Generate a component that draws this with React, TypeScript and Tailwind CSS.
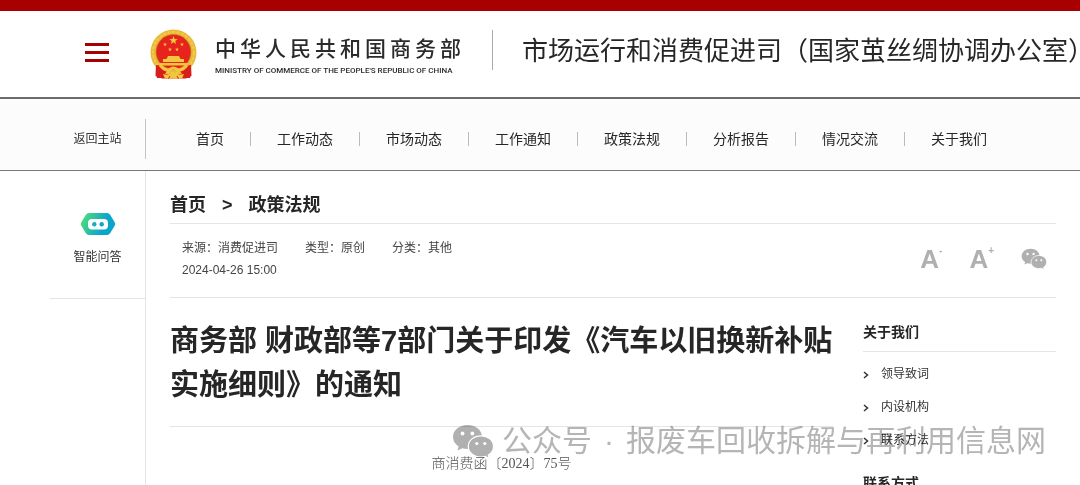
import { Fragment } from "react";

const navItems = [
  "首页",
  "工作动态",
  "市场动态",
  "工作通知",
  "政策法规",
  "分析报告",
  "情况交流",
  "关于我们",
];

const aboutLinks = ["领导致词", "内设机构", "联系方法"];

const STAR = "M0 -5 L1.2 -1.6 L4.8 -1.5 L1.9 0.6 L2.9 4 L0 2 L-2.9 4 L-1.9 0.6 L-4.8 -1.5 L-1.2 -1.6 Z";

function Emblem() {
  return (
    <svg viewBox="0 0 48 50" className="h-[50px] w-12 shrink-0" aria-hidden="true">
      <path d="M6 34 L5.500 47 L12 49.500 H36 L41.500 47 L41 34 Z" fill="#d81e1a" />
      <circle cx="23.500" cy="23.500" r="23" fill="#e9b93a" />
      <circle cx="23.500" cy="23.500" r="20.500" fill="none" stroke="#f3ca4c" strokeWidth="2" strokeDasharray="3 1.5" />
      <circle cx="23.500" cy="23" r="17.500" fill="#e6231c" stroke="#b98a1e" strokeWidth="0.6" />
      <g fill="#f3c63f">
        <path d={STAR} transform="translate(23.5 11.500) scale(.9)" />
        <path d={STAR} transform="translate(15 15.500) scale(.42)" />
        <path d={STAR} transform="translate(32 15.500) scale(.42)" />
        <path d={STAR} transform="translate(20 20.500) scale(.42)" />
        <path d={STAR} transform="translate(27 20.500) scale(.42)" />
        <path d="M18 27 H29 L30.500 30 H34 V33 H13 V30 H16.500 Z" />
        <path d="M9 34 H38 L37 36.500 H10 Z" />
      </g>
      <path d="M6 36 Q13 36 17 42 L12 49 H7 Q5.500 43 6 36 Z M41 36 Q34 36 30 42 L35 49 H40 Q41.500 43 41 36 Z" fill="#d81e1a" />
      <path d="M10 36 Q15 42.500 20 40.500 Q23.500 37.500 27 40.500 Q32 42.500 37 36" fill="none" stroke="#f3c63f" strokeWidth="3" />
      <path d="M13 45 L18 46 L23.500 43.500 L29 46 L34 45 L32 49.500 H15 Z" fill="#f3c63f" />
      <path d="M18.500 49.500 L20 47 M28.500 49.500 L27 47" fill="none" stroke="#d81e1a" strokeWidth="1" />
    </svg>
  );
}

function RobotIcon() {
  return (
    <svg viewBox="0 0 36 24" className="h-6 w-9" aria-hidden="true">
      <defs>
        <linearGradient id="robot" x1="0" x2="1" y1="0.300" y2="0.600">
          <stop offset="0.100" stopColor="#45d585" />
          <stop offset="0.700" stopColor="#0aa5cb" />
        </linearGradient>
      </defs>
      <path
        d="M9 1 H27 Q29 1 30.300 3 L34.800 10.500 Q35.800 12 34.800 13.500 L30.300 21 Q29 23 27 23 H9 Q7 23 5.700 21 L1.200 13.500 Q0.200 12 1.200 10.500 L5.700 3 Q7 1 9 1 Z"
        fill="url(#robot)"
      />
      <rect x="8" y="7" width="20" height="10.500" rx="4" fill="#fff" />
      <circle cx="14.300" cy="12.200" r="2.200" fill="#14aec0" />
      <circle cx="21.700" cy="12.200" r="2.200" fill="#0aa5cb" />
    </svg>
  );
}

function WechatIcon({ className }: { className?: string }) {
  return (
    <svg viewBox="0 0 42 35" className={className} aria-hidden="true">
      <path
        d="M15.500 1 C7.200 1 1 6.300 1 13 C1 17 3.200 20.200 6.600 22.500 L5.500 26.500 L10.300 24.200 C12 24.700 14 25 16 25 C24 25 30 19.600 30 13 C30 6.300 23.800 1 15.500 1 Z"
        fill="#b0b0b0"
      />
      <path
        d="M29 11.800 C21.800 11.800 16.300 16.500 16.300 22.400 C16.300 28.400 21.800 33 29 33 C30.500 33 32 32.800 33.300 32.400 L37.300 34.500 L36.300 31 C39.500 29 41.500 26 41.500 22.400 C41.500 16.500 36 11.800 29 11.800 Z"
        fill="#b0b0b0"
        stroke="#fff"
        strokeWidth="1.200"
      />
      <g fill="#fff">
        <circle cx="10.500" cy="9.500" r="1.900" />
        <circle cx="20.300" cy="9.500" r="1.900" />
        <circle cx="24.800" cy="19.500" r="1.600" />
        <circle cx="32.800" cy="19.500" r="1.600" />
      </g>
    </svg>
  );
}

function SiteHeader() {
  return (
    <header className="flex items-center border-t-[11px] border-b-2 border-t-[#a80000] border-b-[#6b6b6d] bg-white pt-[18px] pb-[18px] pl-[85px]">
      <button type="button" aria-label="菜单" className="mb-1 flex w-6 shrink-0 flex-col gap-[5px]">
        <span className="h-[3px] bg-[#a80000]" />
        <span className="h-[3px] bg-[#a80000]" />
        <span className="h-[3px] bg-[#a80000]" />
      </button>
      <a href="#" className="ml-[41px] flex shrink-0 items-center gap-[17px] pr-[27px]">
        <Emblem />
        <span className="flex flex-col pt-1.5 text-[#2b2b2b]">
          <span className="text-[21px] leading-7 font-medium tracking-[4px]">中华人民共和国商务部</span>
          <span className="font-[Roboto,sans-serif] text-[8px] leading-4 font-medium whitespace-nowrap">
            MINISTRY OF COMMERCE OF THE PEOPLE'S REPUBLIC OF CHINA
          </span>
        </span>
      </a>
      <p className="mb-2 border-l border-[#aaa] pt-0.5 pl-[29px] text-[26px] leading-[38px] whitespace-nowrap text-[#262626]">
        市场运行和消费促进司（国家茧丝绸协调办公室）
      </p>
    </header>
  );
}

function SiteNav() {
  return (
    <nav className="flex items-center border-b border-[#777] bg-[#fcfcfc] pt-5 pb-[11px] pl-[50px]">
      <a
        href="#"
        className="w-24 shrink-0 border-r border-[#c4c4c4] text-center text-xs leading-10 text-[#333]"
      >
        返回主站
      </a>
      <div className="flex items-center gap-[26px] pl-[50px]">
        {navItems.map((item, i) => (
          <Fragment key={item}>
            {i > 0 && <span className="h-3.5 w-px bg-[#bbb]" />}
            <a href="#" className="text-sm leading-10 whitespace-nowrap text-[#262626]">
              {item}
            </a>
          </Fragment>
        ))}
      </div>
    </nav>
  );
}

function Sidebar() {
  return (
    <aside className="ml-[50px] w-24 shrink-0 border-r border-[#e5e5e5]">
      <a
        href="#"
        className="flex flex-col items-center gap-[11px] border-b border-[#e5e5e5] pt-[41px] pb-[31px] text-xs leading-5 text-[#333]"
      >
        <RobotIcon />
        智能问答
      </a>
    </aside>
  );
}

function ArticleMeta() {
  return (
    <div className="flex items-center justify-between border-b border-[#e5e5e5] pt-[13px] pr-[9px] pb-4 pl-3">
      <div className="text-xs leading-[22px] text-[#444]">
        <p className="flex gap-[27px]">
          <span>来源：消费促进司</span>
          <span>类型：原创</span>
          <span>分类：其他</span>
        </p>
        <p>2024-04-26 15:00</p>
      </div>
      <div className="flex items-center gap-[27px] text-[#b0b0b0]">
        <button type="button" aria-label="缩小字体" className="flex text-[26px] leading-7 font-bold">
          A<span className="text-[10px] leading-3">-</span>
        </button>
        <button type="button" aria-label="放大字体" className="flex text-[26px] leading-7 font-bold">
          A<span className="text-[10px] leading-3">+</span>
        </button>
        <button type="button" aria-label="分享到微信">
          <WechatIcon className="h-[22px] w-[26px]" />
        </button>
      </div>
    </div>
  );
}

function AboutPanel() {
  return (
    <aside className="w-[193px] shrink-0 pt-[22px]">
      <h2 className="border-b border-[#e5e5e5] pb-[7px] text-sm leading-6 font-bold text-[#262626]">关于我们</h2>
      <ul className="pt-1.5">
        {aboutLinks.map((label) => (
          <li key={label}>
            <a href="#" className="flex items-center gap-3 text-xs leading-[33px] text-[#333]">
              <svg viewBox="0 0 6 8" className="h-2 w-1.5" aria-hidden="true">
                <path d="M1 1 L4.500 4 L1 7" fill="none" stroke="#333" strokeWidth="1.500" />
              </svg>
              {label}
            </a>
          </li>
        ))}
      </ul>
      <h2 className="pt-3.5 text-sm leading-6 font-bold text-[#262626]">联系方式</h2>
    </aside>
  );
}

function Watermark() {
  return (
    <div className="pointer-events-none absolute top-[423px] right-[34px] flex items-center gap-2 mix-blend-multiply">
      <WechatIcon className="h-[35px] w-[42px]" />
      <p className="flex gap-3 text-[30px] leading-9 whitespace-nowrap text-[#b5b5b5]">
        <span>公众号</span>
        <span>·</span>
        <span>报废车回收拆解与再利用信息网</span>
      </p>
    </div>
  );
}

export default function App() {
  return (
    <div className="relative flex h-screen flex-col overflow-hidden bg-white font-['Liberation_Sans','Noto_Sans_CJK_SC',sans-serif]">
      <SiteHeader />
      <SiteNav />
      <div className="flex grow">
        <Sidebar />
        <main className="grow pr-6 pl-6">
          <div className="flex items-center gap-4 border-b border-[#e5e5e5] pt-5 pb-1 text-lg leading-7 font-bold text-[#262626]">
            <a href="#">首页</a>
            <span>&gt;</span>
            <a href="#">政策法规</a>
          </div>
          <ArticleMeta />
          <div className="flex gap-[30px]">
            <article className="grow">
              <h1 className="border-b border-[#e5e5e5] pt-[21px] pb-[19px] text-[29px] leading-[44px] font-bold text-[#262626]">
                商务部 财政部等7部门关于印发《汽车以旧换新补贴实施细则》的通知
              </h1>
              <p className="pt-[25px] text-center font-['Liberation_Serif','Noto_Sans_CJK_SC',serif] text-sm leading-6 font-light text-[#555]">
                商消费函〔2024〕75号
              </p>
            </article>
            <AboutPanel />
          </div>
        </main>
      </div>
      <Watermark />
    </div>
  );
}
